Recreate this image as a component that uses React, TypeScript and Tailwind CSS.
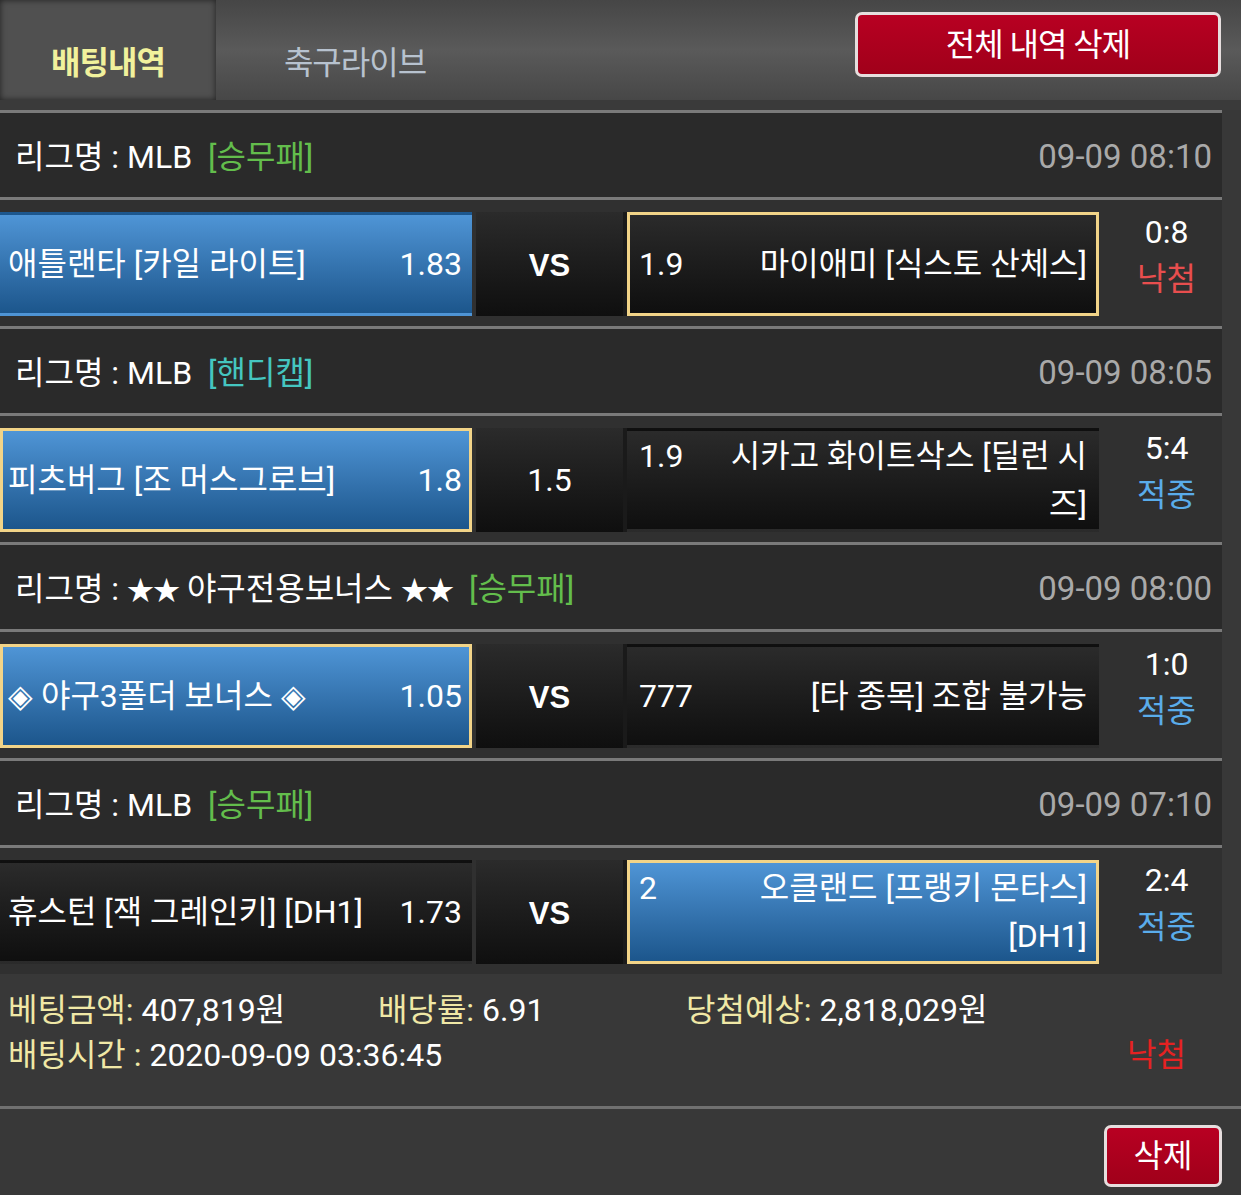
import React from "react";

type Side = {
  name: React.ReactNode;
  odds: string;
  blue?: boolean;
  sel?: boolean;
};

type Bet = {
  league: React.ReactNode;
  tag: string;
  tagColor: "green" | "teal";
  date: string;
  home: Side;
  mid: string;
  away: Side;
  score: string;
  result: "win" | "lose";
};

const Stars = () => <span className="text-[27px] tracking-[-1px]">★★</span>;

const bets: Bet[] = [
  {
    league: "MLB",
    tag: "[승무패]",
    tagColor: "green",
    date: "09-09 08:10",
    home: { name: "애틀랜타 [카일 라이트]", odds: "1.83", blue: true },
    mid: "VS",
    away: { name: "마이애미 [식스토 산체스]", odds: "1.9", sel: true },
    score: "0:8",
    result: "lose",
  },
  {
    league: "MLB",
    tag: "[핸디캡]",
    tagColor: "teal",
    date: "09-09 08:05",
    home: { name: "피츠버그 [조 머스그로브]", odds: "1.8", blue: true, sel: true },
    mid: "1.5",
    away: { name: "시카고 화이트삭스 [딜런 시즈]", odds: "1.9" },
    score: "5:4",
    result: "win",
  },
  {
    league: (
      <>
        <Stars /> 야구전용보너스 <Stars />
      </>
    ),
    tag: "[승무패]",
    tagColor: "green",
    date: "09-09 08:00",
    home: { name: "◈ 야구3폴더 보너스 ◈", odds: "1.05", blue: true, sel: true },
    mid: "VS",
    away: { name: "[타 종목] 조합 불가능", odds: "777" },
    score: "1:0",
    result: "win",
  },
  {
    league: "MLB",
    tag: "[승무패]",
    tagColor: "green",
    date: "09-09 07:10",
    home: { name: "휴스턴 [잭 그레인키] [DH1]", odds: "1.73" },
    mid: "VS",
    away: { name: "오클랜드 [프랭키 몬타스] [DH1]", odds: "2", blue: true, sel: true },
    score: "2:4",
    result: "win",
  },
];

function boxClass(s: Side) {
  const bg = s.blue
    ? "bg-gradient-to-b from-[#4f95d6] to-[#1c568c]"
    : "bg-gradient-to-b from-[#2b2b2b] to-[#0f0f0f]";
  const border = s.sel ? "border-[3px] border-[#f2d488]" : "border-[3px] border-transparent";
  return `${bg} ${border}`;
}

function BetBlock({ b }: { b: Bet }) {
  return (
    <div>
      <div className="h-[3px] bg-[#7a7a7a]" />
      <div className="h-[84px] bg-[#2a2a2a] flex items-center justify-between pl-[15px] pr-[10px] pt-[4px]">
        <div className="text-[32px] text-white flex items-center">
          <span>리그명 : {b.league}</span>
          <span
            className={`ml-[16px] ${b.tagColor === "green" ? "text-[#63bd4c]" : "text-[#45c6c0]"}`}
          >
            {b.tag}
          </span>
        </div>
        <div className="text-[33px] text-[#a9a9a9]">{b.date}</div>
      </div>
      <div className="h-[3px] bg-[#7a7a7a]" />
      <div className="h-[126px] bg-[#303030] flex pt-[12px] pb-[10px]">
        <div
          className={`w-[472px] flex items-center pl-[5px] pr-[7px] text-[32px] text-white leading-[48px] ${boxClass(b.home)}`}
        >
          <div className="flex w-full justify-between items-start gap-[8px]">
            <span>{b.home.name}</span>
            <span>{b.home.odds}</span>
          </div>
        </div>
        <div className="w-[4px]" />
        <div className="w-[147px] flex items-center justify-center bg-gradient-to-b from-[#2b2b2b] to-[#0f0f0f] text-white">
          {b.mid === "VS" ? (
            <span className="text-[31px] font-bold font-[family-name:'Liberation_Sans',Arial,sans-serif] pt-[4px]">VS</span>
          ) : (
            <span className="text-[32px]">{b.mid}</span>
          )}
        </div>
        <div className="w-[4px] bg-[#1a1a1a]" />
        <div
          className={`w-[472px] flex items-center pl-[9px] pr-[9px] text-[32px] text-white leading-[48px] ${boxClass(b.away)}`}
        >
          <div className="flex w-full justify-between items-start gap-[40px]">
            <span>{b.away.odds}</span>
            <span className="text-right">{b.away.name}</span>
          </div>
        </div>
        <div className="flex-1 flex flex-col items-center justify-center text-[32px] leading-[47px] pl-[12px] pb-[16px]">
          <span className="text-white">{b.score}</span>
          <span className={b.result === "lose" ? "text-[#e84e4e]" : "text-[#5aacea]"}>
            {b.result === "lose" ? "낙첨" : "적중"}
          </span>
        </div>
      </div>
    </div>
  );
}

export default function App() {
  return (
    <div className="w-[1241px] min-h-[1195px] bg-[#383838] font-[family-name:Roboto,'Noto_Sans_CJK_KR',sans-serif] overflow-hidden">
      {/* top bar */}
      <div className="h-[100px] flex items-stretch bg-gradient-to-b from-[#464646] via-[#5a5a5a] to-[#474747]">
        <div className="w-[216px] bg-[#505050] shadow-[inset_0_0_6px_rgba(0,0,0,0.6)] flex items-end justify-center pb-[21px]">
          <span className="text-[32px] leading-none font-bold text-[#f1f19c] tracking-[-1px]">배팅내역</span>
        </div>
        <div className="w-[278px] flex items-end justify-center pb-[21px]">
          <span className="text-[32px] leading-none text-[#b7c2cf] tracking-[-1px]">축구라이브</span>
        </div>
        <div className="flex-1 flex items-start justify-end pt-[12px] pr-[20px]">
          <button className="w-[366px] h-[65px] rounded-[7px] border-[3px] border-[#e6dede] bg-gradient-to-b from-[#b80022] to-[#a0001a] text-white text-[32px] tracking-[-1px] flex items-center justify-center">
            전체 내역 삭제
          </button>
        </div>
      </div>
      <div className="h-[10px] bg-[#3a3a3a]" />
      <div className="w-[1222px]">
        {bets.map((b, i) => (
          <BetBlock key={i} b={b} />
        ))}
      </div>
      {/* summary */}
      <div className="w-[1222px] pt-[14px] pb-[28px] pl-[8px] pr-[36px] text-[32px] leading-[45px]">
        <div className="flex">
          <div className="w-[370px]">
            <span className="text-[#f0e8a6]">베팅금액:</span>
            <span className="text-white"> 407,819원</span>
          </div>
          <div className="w-[308px]">
            <span className="text-[#f0e8a6]">배당률:</span>
            <span className="text-white"> 6.91</span>
          </div>
          <div>
            <span className="text-[#f0e8a6]">당첨예상:</span>
            <span className="text-white"> 2,818,029원</span>
          </div>
        </div>
        <div className="flex justify-between">
          <div>
            <span className="text-[#f0e8a6]">배팅시간 :</span>
            <span className="text-white"> 2020-09-09 03:36:45</span>
          </div>
          <span className="text-[#e52222]">낙첨</span>
        </div>
      </div>
      <div className="h-[3px] bg-[#707070]" />
      <div className="w-[1222px] flex justify-end pt-[16px] pb-[10px]">
        <button className="w-[118px] h-[62px] rounded-[7px] border-[3px] border-[#e6dede] bg-gradient-to-b from-[#b80022] to-[#a0001a] text-white text-[32px] flex items-center justify-center">
          삭제
        </button>
      </div>
    </div>
  );
}
